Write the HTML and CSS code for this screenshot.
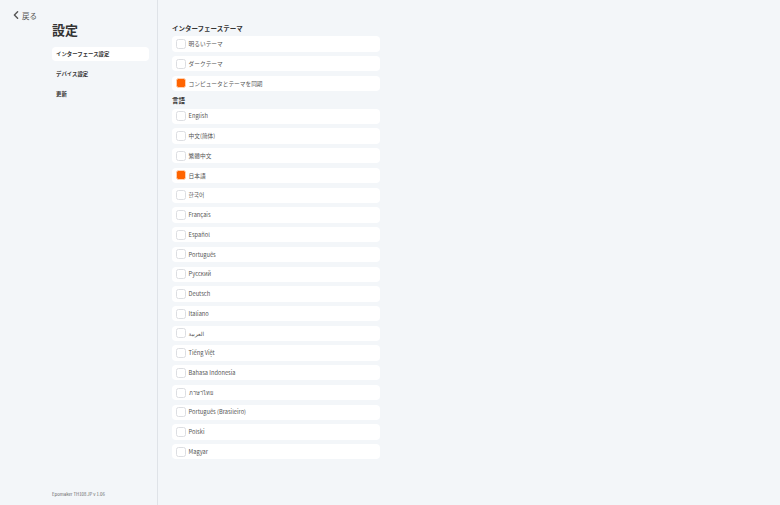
FILE: index.html
```html
<!DOCTYPE html>
<html lang="ja">
<head>
<meta charset="utf-8">
<title>設定</title>
<link rel="stylesheet" href="styles.css">
</head>
<body>
<div class="app">
  <aside class="sidebar">
    <div class="back">
      <svg class="chev" width="6" height="8" viewBox="0 0 6 8"><path d="M4.6 0.8 L1.4 4 L4.6 7.2" fill="none" stroke="#555" stroke-width="1.4" stroke-linecap="round" stroke-linejoin="round"/></svg>
      <span>戻る</span>
    </div>
    <div class="side-inner">
      <h1 class="title">設定</h1>
      <nav class="nav">
        <div class="nav-item active">インターフェース設定</div>
        <div class="nav-item">デバイス設定</div>
        <div class="nav-item">更新</div>
      </nav>
    </div>
    <div class="footer">Epomaker TH108 JP v 1.06</div>
  </aside>
  <main class="main">
    <h2 class="section-title first">インターフェーステーマ</h2>
    <div class="list">
      <div class="row"><span class="box"></span><span class="label">明るいテーマ</span></div>
      <div class="row"><span class="box"></span><span class="label">ダークテーマ</span></div>
      <div class="row"><span class="box checked"></span><span class="label">コンピュータとテーマを同期</span></div>
    </div>
    <h2 class="section-title">言語</h2>
    <div class="list">
      <div class="row"><span class="box"></span><span class="label">English</span></div>
      <div class="row"><span class="box"></span><span class="label">中文(简体)</span></div>
      <div class="row"><span class="box"></span><span class="label">繁體中文</span></div>
      <div class="row"><span class="box checked"></span><span class="label">日本語</span></div>
      <div class="row"><span class="box"></span><span class="label kr">한국어</span></div>
      <div class="row"><span class="box"></span><span class="label">Français</span></div>
      <div class="row"><span class="box"></span><span class="label">Español</span></div>
      <div class="row"><span class="box"></span><span class="label">Português</span></div>
      <div class="row"><span class="box"></span><span class="label">Русский</span></div>
      <div class="row"><span class="box"></span><span class="label">Deutsch</span></div>
      <div class="row"><span class="box"></span><span class="label">Italiano</span></div>
      <div class="row"><span class="box"></span><span class="label">العربية</span></div>
      <div class="row"><span class="box"></span><span class="label">Tiếng Việt</span></div>
      <div class="row"><span class="box"></span><span class="label">Bahasa Indonesia</span></div>
      <div class="row"><span class="box"></span><span class="label">ภาษาไทย</span></div>
      <div class="row"><span class="box"></span><span class="label">Português (Brasileiro)</span></div>
      <div class="row"><span class="box"></span><span class="label">Polski</span></div>
      <div class="row"><span class="box"></span><span class="label">Magyar</span></div>
    </div>
  </main>
</div>
</body>
</html>
```
FILE: styles.css
```css
* { box-sizing: border-box; margin: 0; padding: 0; }
html, body { width: 780px; height: 505px; }
body {
  background: #f3f6f9;
  font-family: "Noto Sans CJK JP", "Noto Sans", "DejaVu Sans", sans-serif;
  color: #333;
  overflow: hidden;
}
.app { display: flex; height: 505px; }

.sidebar {
  width: 158px;
  flex: none;
  border-right: 1px solid #dfe3e8;
  display: flex;
  flex-direction: column;
  padding: 9px 8px 8px 12px;
}
.back {
  display: flex;
  align-items: center;
  gap: 3px;
  height: 12px;
  font-size: 7.5px;
  color: #555;
}
.chev { display: block; margin-left: 1px; }
.side-inner { margin-left: 40px; width: 97px; }
.title {
  margin-top: 1px;
  font-size: 13px;
  line-height: 15px;
  font-weight: 700;
  color: #333;
}
.nav {
  margin-top: 9.7px;
  display: flex;
  flex-direction: column;
  gap: 6px;
}
.nav-item {
  height: 14px;
  line-height: 14px;
  padding-left: 4px;
  font-size: 5.4px;
  font-weight: 700;
  color: #333;
  border-radius: 4px;
}
.nav-item.active { background: #fff; }
.footer {
  margin-top: auto;
  margin-left: 40px;
  font-size: 4.3px;
  line-height: 6px;
  color: #666;
}

.main {
  flex: 1;
  padding: 22.7px 0 0 14px;
}
.section-title {
  font-size: 6.5px;
  line-height: 11px;
  font-weight: 700;
  color: #333;
  margin: 4px 0 2.6px;
}
.section-title.first { margin-top: 0; }
.list {
  width: 208px;
  display: flex;
  flex-direction: column;
  gap: 4.45px;
}
.row {
  height: 15.3px;
  background: #fff;
  border-radius: 4px;
  display: flex;
  align-items: center;
  padding-left: 4.3px;
  gap: 2.3px;
}
.box {
  width: 10px;
  height: 10px;
  flex: none;
  border: 1px solid #dcdee2;
  border-radius: 2.5px;
  background: #fff;
}
.box.checked {
  background: #ff6400;
  border-color: #ffd2b3;
}
.label {
  font-size: 5.7px;
  color: #555;
  line-height: 1;
}
.label.kr { font-family: "Noto Sans CJK KR", "Noto Sans CJK JP", sans-serif; }
```
